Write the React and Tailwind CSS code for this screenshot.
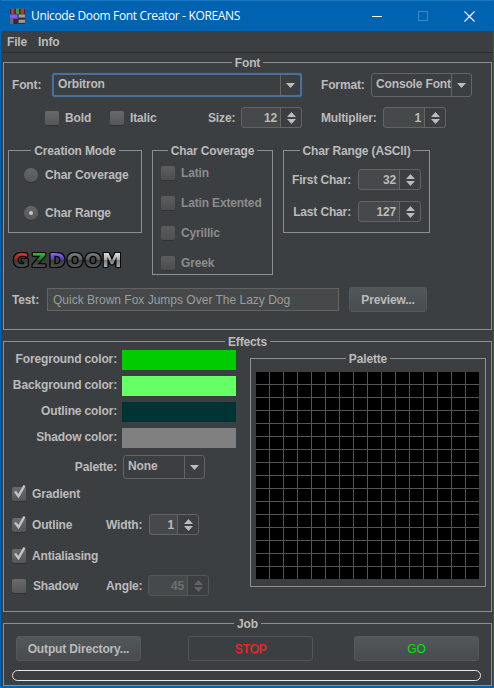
const FONT = "font-['Liberation_Sans',Arial,sans-serif]";

function Tri({ up = false, className = "" }) {
  return (
    <svg width="9" height="5" viewBox="0 0 9 5" className={className}>
      <path d={up ? "M4.5 0 L9 5 L0 5 Z" : "M0 0 L9 0 L4.5 5 Z"} fill="currentColor" />
    </svg>
  );
}

function Panel({ title, className = "", children }) {
  return (
    <fieldset className={`border border-[#8c8e8f] min-w-0 ${className}`}>
      <legend className="mx-auto px-[3px] h-4 leading-[18px] text-[#bbbbbb]">{title}</legend>
      {children}
    </fieldset>
  );
}

function Combo({ value, width, focused = false, arrowW = 20 }) {
  return (
    <div
      className={`flex items-stretch h-[24px] shrink-0 rounded-[3px] bg-[#3c3f41] ${
        focused
          ? "border-2 border-[#46719f] shadow-[0_0_1px_#46719f]"
          : "border border-[#646464]"
      }`}
      style={{ width }}
    >
      <div className="flex-1 flex items-center text-[#bbbbbb] pl-[4px] -mt-[2px] whitespace-nowrap overflow-hidden">{value}</div>
      <div className="flex items-center justify-center border-l border-[#646464] text-[#bbbbbb]" style={{ width: arrowW }}>
        <Tri />
      </div>
    </div>
  );
}

function Spinner({ value, width, arrowW = 21, disabled = false }) {
  return (
    <div
      className={`flex items-stretch h-[21px] shrink-0 rounded-[3px] bg-[#45494a] border ${
        disabled ? "border-[#525556] text-[#6d6f70]" : "border-[#646464] text-[#bbbbbb]"
      }`}
      style={{ width }}
    >
      <div className="flex-1 flex items-center justify-end pr-[3px]">{value}</div>
      <div
        className={`flex flex-col items-center justify-center gap-[2px] border-l bg-[#3c3f41] rounded-r-[3px] ${
          disabled ? "border-[#525556] text-[#616364]" : "border-[#646464] text-[#bbbbbb]"
        }`}
        style={{ width: arrowW }}
      >
        <Tri up />
        <Tri />
      </div>
    </div>
  );
}

function Check({ label, checked = false, disabled = false, gap = 6, className = "" }) {
  return (
    <div className={`flex items-center ${className}`} style={{ gap }}>
      <div
        className={`relative w-[14px] h-[14px] shrink-0 rounded-[2px] bg-gradient-to-b from-[#6a6a6a] to-[#555657] shadow-[0_1px_0_#2f3133] ${
          disabled ? "opacity-70" : ""
        }`}
      >
        {checked && (
          <svg width="16" height="16" viewBox="0 0 16 16" className="absolute -top-[3px] left-0">
            <path d="M3 7.5 L6.5 12 L12.5 1.5" fill="none" stroke="#c4c4c4" strokeWidth="2.4" />
          </svg>
        )}
      </div>
      <span className={disabled ? "text-[#8a8c8d]" : "text-[#bbbbbb]"}>{label}</span>
    </div>
  );
}

function Radio({ label, selected = false }) {
  return (
    <div className="flex items-center gap-[7px]">
      <div className="flex items-center justify-center w-[14px] h-[14px] rounded-full bg-gradient-to-b from-[#666666] to-[#57595a] shadow-[0_1px_0_#303234]">
        {selected && <div className="w-[4px] h-[4px] rounded-full bg-[#c8c8c8]" />}
      </div>
      <span className="text-[#bbbbbb]">{label}</span>
    </div>
  );
}

function Btn({ children, width, disabled = false, className = "" }) {
  return (
    <div
      className={`flex items-center justify-center h-[25px] rounded-[3px] border shrink-0 ${
        disabled
          ? "border-[#525556] bg-[#3c3f41]"
          : "border-[#55595b] bg-gradient-to-b from-[#525759] to-[#484c4e]"
      } ${className}`}
      style={{ width }}
    >
      {children}
    </div>
  );
}

function Logo() {
  const letters = [
    ["G", "bg-[linear-gradient(#e05040_0%,#a01c14_48%,#3a3a3a_50%,#555_100%)]"],
    ["Z", "bg-[linear-gradient(#4fc04f_0%,#108a10_48%,#3a3a3a_50%,#555_100%)]"],
    ["D", "bg-[linear-gradient(#9a80f0_0%,#5a30d0_48%,#3a3a3a_50%,#555_100%)]"],
    ["O", "bg-[linear-gradient(#8a8a8a_0%,#5c5c5c_48%,#3a3a3a_50%,#666_100%)]"],
    ["O", "bg-[linear-gradient(#8a8a8a_0%,#5c5c5c_48%,#3a3a3a_50%,#666_100%)]"],
    ["M", "bg-[linear-gradient(#eeeeee_0%,#aaaaaa_48%,#777_50%,#bbb_100%)]"],
  ];
  return (
    <div className="flex h-[18px] w-[108px] items-center justify-between font-['DejaVu_Sans',sans-serif] font-bold text-[20px] leading-[18px] tracking-normal [filter:drop-shadow(1px_0_#0a0a0a)_drop-shadow(-1px_0_#0a0a0a)_drop-shadow(0_1px_#0a0a0a)_drop-shadow(0_-1px_#0a0a0a)]">
      {letters.map(([c, g], i) => (
        <span key={i} className={`w-[18px] text-center bg-clip-text text-transparent ${g}`}>
          {c}
        </span>
      ))}
    </div>
  );
}

function ColorRow({ label, color }) {
  return (
    <div className="flex items-center h-[20px]">
      <span className="w-[109px] text-right text-[#bbbbbb] -mt-[2px]">{label}</span>
      <div className={`ml-[5px] w-[114px] h-[20px] ${color}`} />
    </div>
  );
}

export default function App() {
  const cells = Array.from({ length: 256 });
  return (
    <div
      className={`w-[494px] h-[688px] overflow-hidden flex flex-col bg-[#3c3f41] border-x border-b-2 border-[#0063b1] text-[12px] font-bold leading-4 tracking-[-0.15px] ${FONT}`}
    >
      {/* Title bar */}
      <div className="h-[31px] shrink-0 flex items-center bg-[#0063b1] border-t border-[#1a78c2] pl-[9px] -mx-px">
        <svg width="17" height="17" viewBox="0 0 16 16" className="shrink-0">
          <rect x="1" y="1" width="14" height="14" fill="#2e2e34" />
          <rect x="2" y="0.5" width="3" height="5" fill="#c0392b" />
          <rect x="6.5" y="0.5" width="3" height="5" fill="#3f9b3f" />
          <rect x="11" y="0.5" width="3" height="5" fill="#c0392b" />
          <rect x="1" y="6" width="7" height="4" fill="#8a5ae0" />
          <rect x="1" y="10" width="3" height="5" fill="#6c6c74" />
          <rect x="9" y="6" width="6" height="3" fill="#9a9aa2" />
          <rect x="9" y="11" width="6" height="3" fill="#9a9aa2" />
        </svg>
        <span className="ml-[5px] text-white font-normal font-['Open_Sans',sans-serif] text-[12px] tracking-[-0.35px]">
          Unicode Doom Font Creator - KOREANS
        </span>
        <div className="ml-auto flex items-center h-full">
          <div className="w-[46px] flex justify-center"><div className="w-[10px] h-px bg-white" /></div>
          <div className="w-[46px] flex justify-center"><div className="w-[10px] h-[10px] border border-[#3f87c6]" /></div>
          <div className="w-[46px] flex justify-center mr-[2px]">
            <svg width="11" height="11" viewBox="0 0 11 11"><path d="M0.5 0.5 L10.5 10.5 M10.5 0.5 L0.5 10.5" stroke="#fff" strokeWidth="1.1" /></svg>
          </div>
        </div>
      </div>

      {/* Menu */}
      <div className="h-[22px] shrink-0 flex items-center gap-[11px] pl-[6px] border-b border-[#2b2d2e] text-[#bbbbbb]">
        <span>File</span>
        <span>Info</span>
      </div>

      {/* Font */}
      <Panel title="Font" className="ml-[2px] w-[489px] h-[276px] mt-px shrink-0">
        <div className="flex items-center h-[24px] mt-[3px] pl-[8px]">
          <span className="w-[40px] text-[#bbbbbb]">Font:</span>
          <Combo value="Orbitron" width={250} focused />
          <span className="ml-[19px] w-[50px] text-[#bbbbbb]">Format:</span>
          <Combo value="Console Font" width={101} />
        </div>
        <div className="flex items-center h-[21px] mt-[10px] pl-[41px]">
          <Check label="Bold" className="w-[65px]" />
          <Check label="Italic" className="w-[98px]" />
          <span className="w-[33px] text-[#bbbbbb]">Size:</span>
          <Spinner value="12" width={61} />
          <span className="ml-[19px] w-[62px] text-[#bbbbbb]">Multiplier:</span>
          <Spinner value="1" width={63} />
        </div>
        <div className="flex items-start mt-[14px] pl-[4px]">
          <div className="flex flex-col w-[134px] shrink-0">
            <Panel title="Creation Mode" className="w-[134px] h-[91px]">
              <div className="flex flex-col gap-[22px] pl-[15px] pt-[9px]">
                <Radio label="Char Coverage" />
                <Radio label="Char Range" selected />
              </div>
            </Panel>
            <div className="mt-[18px] pl-[4px]"><Logo /></div>
          </div>
          <Panel title="Char Coverage" className="ml-[10px] w-[121px] h-[133px] shrink-0">
            <div className="flex flex-col gap-[14px] pl-[8px] pt-[7px]">
              <Check label="Latin" disabled />
              <Check label="Latin Extented" disabled />
              <Check label="Cyrillic" disabled />
              <Check label="Greek" disabled />
            </div>
          </Panel>
          <Panel title="Char Range (ASCII)" className="ml-[10px] w-[147px] h-[91px] shrink-0">
            <div className="flex flex-col gap-[11px] pt-[11px] pr-[8px] items-end">
              <div className="flex items-center gap-[7px]">
                <span className="text-[#bbbbbb]">First Char:</span>
                <Spinner value="32" width={63} />
              </div>
              <div className="flex items-center gap-[7px]">
                <span className="text-[#bbbbbb]">Last Char:</span>
                <Spinner value="127" width={63} />
              </div>
            </div>
          </Panel>
        </div>
        <div className="flex items-center h-[25px] mt-[12px] pl-[8px]">
          <span className="w-[35px] text-[#bbbbbb]">Test:</span>
          <div className="w-[292px] h-[23px] flex items-center pl-[5px] bg-[#45494a] border border-[#646464] text-[#9b9d9e] font-normal tracking-normal">
            Quick Brown Fox Jumps Over The Lazy Dog
          </div>
          <Btn width={78} className="ml-[10px]"><span className="text-[#bbbbbb]">Preview...</span></Btn>
        </div>
      </Panel>

      {/* Effects */}
      <Panel title="Effects" className="ml-[2px] w-[489px] h-[279px] mt-[3px] shrink-0">
        <div className="flex items-start pl-[4px]">
          <div className="w-[242px] shrink-0 flex flex-col">
            <div className="flex flex-col gap-[6px] mt-[1px]">
              <ColorRow label="Foreground color:" color="bg-[#00cc00]" />
              <ColorRow label="Background color:" color="bg-[#66ff66]" />
              <ColorRow label="Outline color:" color="bg-[#003333]" />
              <ColorRow label="Shadow color:" color="bg-[#808080]" />
            </div>
            <div className="flex items-center mt-[7px]">
              <span className="w-[109px] text-right text-[#bbbbbb]">Palette:</span>
              <div className="ml-[6px]"><Combo value="None" width={82} /></div>
            </div>
            <Check label="Gradient" checked className="mt-[7px] ml-[4px]" />
            <div className="flex items-center h-[21px] mt-[12px] ml-[4px]">
              <Check label="Outline" checked className="w-[94px]" />
              <span className="w-[43px] text-[#bbbbbb]">Width:</span>
              <Spinner value="1" width={50} arrowW={21} />
            </div>
            <Check label="Antialiasing" checked className="mt-[13px] ml-[4px]" />
            <div className="flex items-center h-[21px] mt-[11px] ml-[4px]">
              <Check label="Shadow" className="w-[94px]" gap={7} />
              <span className="w-[42px] text-[#bbbbbb]">Angle:</span>
              <Spinner value="45" width={61} disabled />
            </div>
          </div>
          <Panel title="Palette" className="w-[236px] h-[237px] mt-[1px] shrink-0">
            <div className="mt-[6px] mx-[5px] grid grid-cols-[repeat(16,13px)] grid-rows-[repeat(16,12px)] gap-px bg-[#555555] w-[223px]">
              {cells.map((_, i) => (
                <div key={i} className="bg-black" />
              ))}
            </div>
          </Panel>
        </div>
      </Panel>

      {/* Job */}
      <Panel title="Job" className="ml-[2px] w-[489px] h-[71px] mt-[3px] shrink-0">
        <div className="flex items-center mt-[5px] pl-[12px]">
          <Btn width={125}><span className="text-[#bbbbbb]">Output Directory...</span></Btn>
          <Btn width={125} disabled className="ml-[47px]"><span className="text-[#ff1a1a] font-normal [text-shadow:1px_1px_#555]">STOP</span></Btn>
          <Btn width={125} className="ml-[41px]"><span className="text-[#00e600] font-normal">GO</span></Btn>
        </div>
        <div className="mt-[9px] ml-[8px] w-[469px] h-[11px] rounded-full border border-[#e8e8e8]" />
      </Panel>
    </div>
  );
}
